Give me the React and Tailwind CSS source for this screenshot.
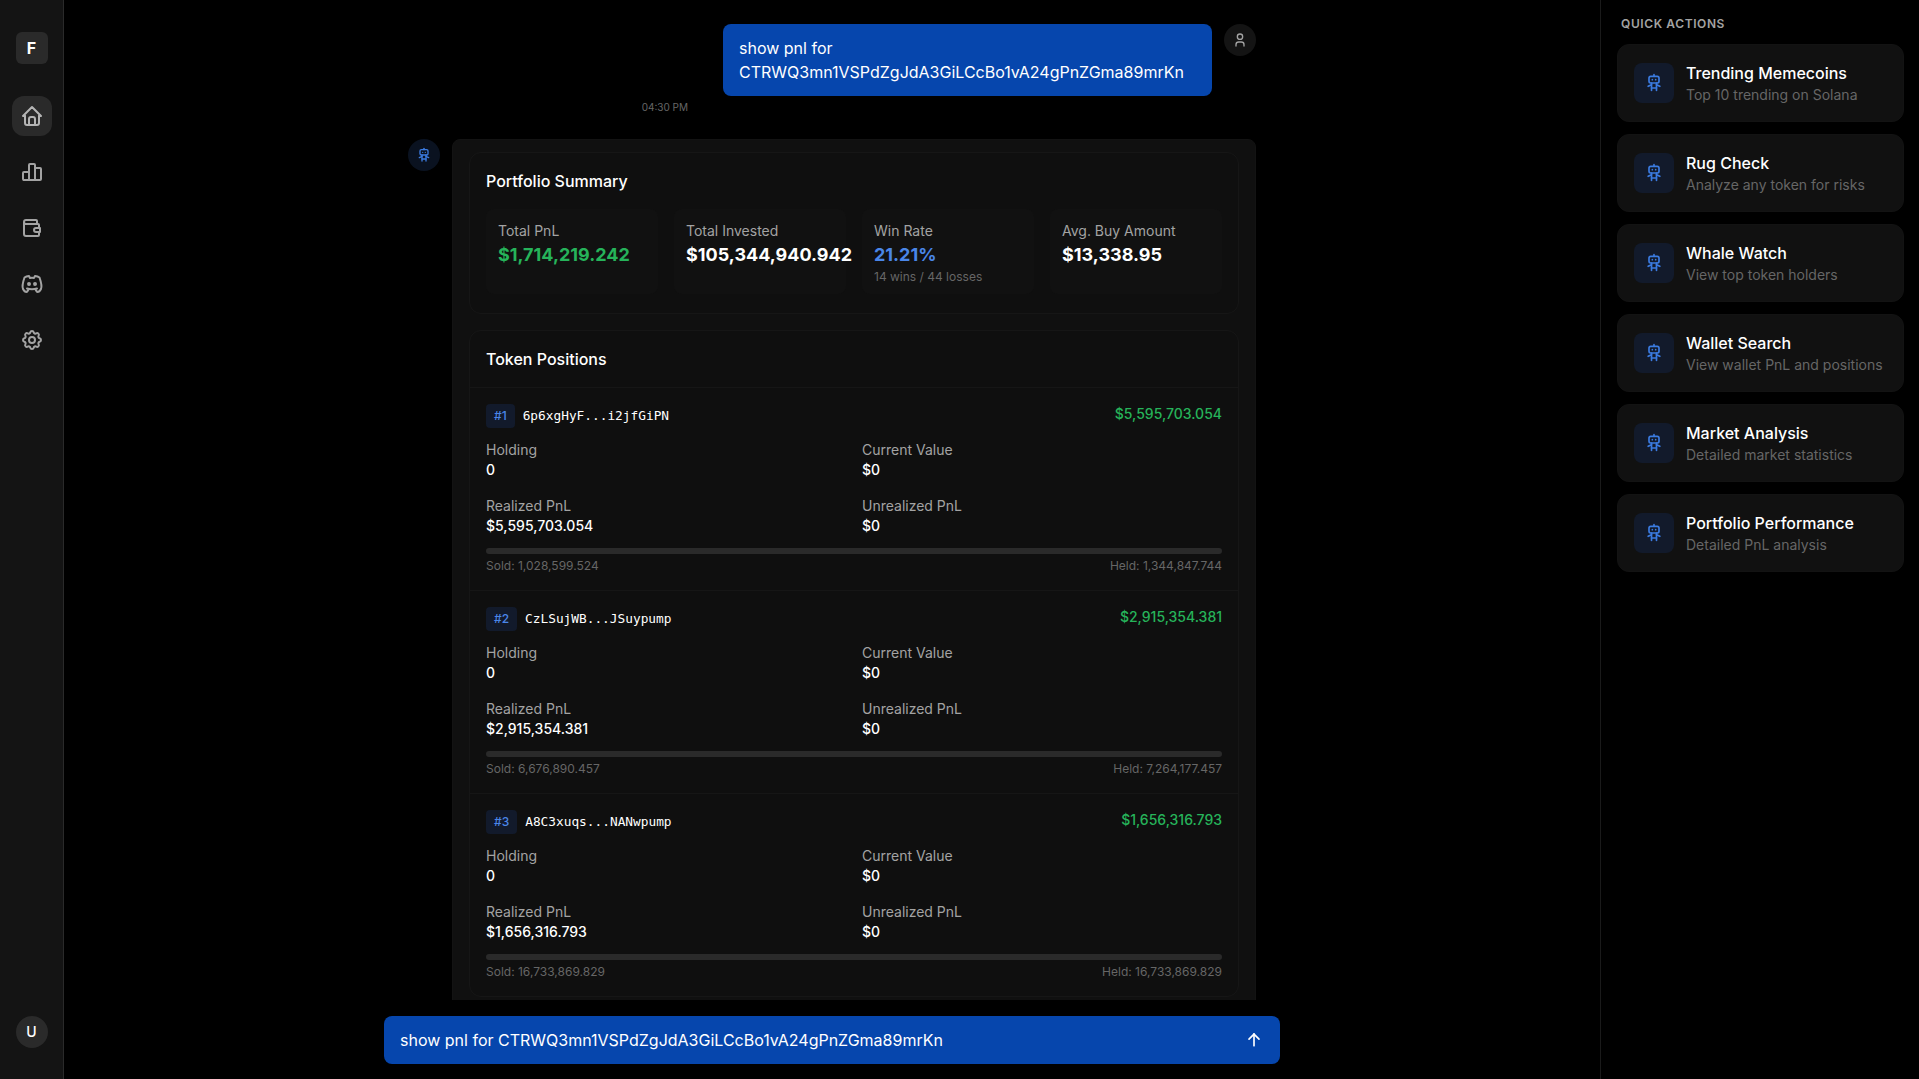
import { TbHome, TbChartBar, TbWallet, TbBrandDiscord, TbSettings, TbRobot, TbUser, TbArrowUp } from 'react-icons/tb';

const font = { fontFamily: 'Inter, sans-serif' };

const tokens = [
  { rank: '#1', addr: '6p6xgHyF...i2jfGiPN', pnl: '$5,595,703.054', sold: '1,028,599.524', held: '1,344,847.744' },
  { rank: '#2', addr: 'CzLSujWB...JSuypump', pnl: '$2,915,354.381', sold: '6,676,890.457', held: '7,264,177.457' },
  { rank: '#3', addr: 'A8C3xuqs...NANwpump', pnl: '$1,656,316.793', sold: '16,733,869.829', held: '16,733,869.829' },
];

const actions = [
  { title: 'Trending Memecoins', sub: 'Top 10 trending on Solana' },
  { title: 'Rug Check', sub: 'Analyze any token for risks' },
  { title: 'Whale Watch', sub: 'View top token holders' },
  { title: 'Wallet Search', sub: 'View wallet PnL and positions' },
  { title: 'Market Analysis', sub: 'Detailed market statistics' },
  { title: 'Portfolio Performance', sub: 'Detailed PnL analysis' },
];

function Sidebar() {
  const icons = [TbChartBar, TbWallet, TbBrandDiscord, TbSettings];
  return (
    <aside className="w-16 shrink-0 flex flex-col items-center pt-8 pb-[31px] bg-[#141414] border-r border-[#2a2a2a]">
      <div className="w-8 h-8 rounded-md bg-[#2a2a2a] flex items-center justify-center text-white text-base font-bold mb-8">F</div>
      <nav className="flex flex-col gap-4">
        <button className="w-10 h-10 rounded-xl bg-[#2a2a2a] flex items-center justify-center text-[#b4b4b4]"><TbHome size={24} /></button>
        {icons.map((Icon, i) => (
          <button key={i} className="w-10 h-10 rounded-xl flex items-center justify-center text-[#a3a3a3]"><Icon size={24} /></button>
        ))}
      </nav>
      <div className="mt-auto w-8 h-8 rounded-full bg-[#2a2a2a] flex items-center justify-center text-white text-sm font-medium">U</div>
    </aside>
  );
}

function Stat({ label, value, color = 'text-white', sub }) {
  return (
    <div className="h-[85px] bg-[#111111] rounded-lg p-3 whitespace-nowrap">
      <p className="text-sm text-[#a3a3a3]">{label}</p>
      <p className={`text-lg font-bold leading-7 ${color}`}>{value}</p>
      {sub && <p className="text-xs text-[#666666]">{sub}</p>}
    </div>
  );
}

function Field({ label, value }) {
  return (
    <div>
      <p className="text-sm text-[#a3a3a3]">{label}</p>
      <p className="text-sm font-medium text-white">{value}</p>
    </div>
  );
}

function TokenRow({ token }) {
  return (
    <div className="border-t border-[#161616] p-4">
      <div className="flex justify-between items-start h-6 mb-3">
        <div className="flex items-center gap-2">
          <span className="h-6 px-2 rounded bg-[#121a2b] text-xs font-medium text-[#4a86e8] flex items-center">{token.rank}</span>
          <span className="text-[12.8px] text-white font-['DejaVu_Sans_Mono',monospace]">{token.addr}</span>
        </div>
        <span className="text-sm font-medium text-[#26b35a]">{token.pnl}</span>
      </div>
      <div className="grid grid-cols-2 gap-x-4 gap-y-4">
        <Field label="Holding" value="0" />
        <Field label="Current Value" value="$0" />
        <Field label="Realized PnL" value={token.pnl} />
        <Field label="Unrealized PnL" value="$0" />
      </div>
      <div className="mt-3 h-1.5 rounded-full bg-[#2a2a2a]"></div>
      <div className="mt-1 flex justify-between text-xs text-[#666666]">
        <span>Sold: {token.sold}</span>
        <span>Held: {token.held}</span>
      </div>
    </div>
  );
}

function Chat() {
  return (
    <div className="h-[1000px] shrink-0 overflow-hidden w-[896px] mx-auto px-6 pt-6">
      <div className="flex justify-end gap-3">
        <div className="w-[489px] bg-[#0646ad] rounded-lg px-4 py-3 text-white text-base leading-6">
          <p>show pnl for</p>
          <p>CTRWQ3mn1VSPdZgJdA3GiLCcBo1vA24gPnZGma89mrKn</p>
        </div>
        <div className="w-8 h-8 rounded-full bg-[#141414] flex items-center justify-center text-[#a3a3a3] shrink-0"><TbUser size={16} /></div>
      </div>
      <p className="mt-1 mb-6 text-[10px] leading-[15px] text-[#666666] text-right pr-[568px]">04:30 PM</p>
      <div className="flex gap-3 items-start">
        <div className="w-8 h-8 rounded-full bg-[#0a1220] flex items-center justify-center text-[#3b7be0] shrink-0"><TbRobot size={16} /></div>
        <div className="flex-1 bg-[#101010] rounded-lg border border-[#131313] pl-4 pr-4 pt-3 pb-3 flex flex-col gap-4">
          <section className="bg-[#0f0f0f] border border-[#161616] rounded-xl pt-4 px-4 pb-[19px]">
            <h3 className="text-base font-medium text-white mb-4">Portfolio Summary</h3>
            <div className="grid grid-cols-4 gap-4">
              <Stat label="Total PnL" value="$1,714,219.242" color="text-[#26b35a]" />
              <Stat label="Total Invested" value="$105,344,940.942" />
              <Stat label="Win Rate" value="21.21%" color="text-[#4a86e8]" sub="14 wins / 44 losses" />
              <Stat label="Avg. Buy Amount" value="$13,338.95" />
            </div>
          </section>
          <section className="bg-[#0f0f0f] border border-[#161616] rounded-xl">
            <h3 className="p-4 text-base font-medium text-white">Token Positions</h3>
            {tokens.map(t => <TokenRow key={t.rank} token={t} />)}
          </section>
        </div>
      </div>
    </div>
  );
}

function QuickActions() {
  return (
    <aside className="w-[319px] shrink-0 border-l border-[#1a1a1a] pt-4 pl-4 pr-[15px]">
      <h2 className="px-1 mb-3 text-xs font-semibold tracking-wider text-[#a3a3a3] uppercase">Quick Actions</h2>
      <div className="flex flex-col gap-3">
        {actions.map(a => (
          <button key={a.title} className="flex items-center gap-3 p-4 rounded-xl bg-[#111111] border border-[#131313] text-left">
            <div className="w-10 h-10 rounded-lg bg-[#121a2b] flex items-center justify-center text-[#3b7be0]"><TbRobot size={20} /></div>
            <div>
              <p className="text-base font-medium text-white">{a.title}</p>
              <p className="text-sm text-[#666666]">{a.sub}</p>
            </div>
          </button>
        ))}
      </div>
    </aside>
  );
}

export default function App() {
  return (
    <div className="flex h-screen bg-black overflow-hidden" style={font}>
      <Sidebar />
      <main className="flex-1 min-w-0 flex flex-col">
        <Chat />
        <div className="w-[896px] mx-auto mt-4 h-12 rounded-lg bg-[#0646ad] flex items-center justify-between px-4 text-white text-base">
          <span>show pnl for CTRWQ3mn1VSPdZgJdA3GiLCcBo1vA24gPnZGma89mrKn</span>
          <TbArrowUp size={20} />
        </div>
      </main>
      <QuickActions />
    </div>
  );
}
